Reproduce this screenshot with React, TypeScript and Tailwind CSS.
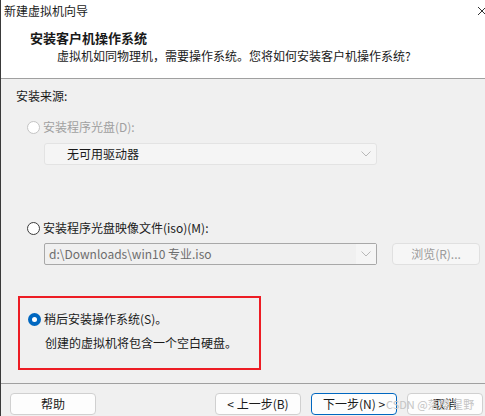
import React from "react";

const FONT = "font-['Microsoft_YaHei_UI','Noto_Sans_CJK_SC',sans-serif]";

type RadioProps = { checked?: boolean; disabled?: boolean };

const Radio = ({ checked, disabled }: RadioProps) => {
  if (checked) {
    return (
      <span className="flex h-[13px] w-[13px] items-center justify-center rounded-full bg-[#0067c0]">
        <span className="h-[5px] w-[5px] rounded-full bg-white" />
      </span>
    );
  }
  return (
    <span
      className={`h-[13px] w-[13px] rounded-full border bg-white ${
        disabled ? "border-[#c4c4c4] bg-[#f7f7f7]" : "border-[#3c3c3c]"
      }`}
    />
  );
};

const Chevron = ({ color }: { color: string }) => (
  <svg width="10" height="6" viewBox="0 0 10 6" fill="none">
    <path d="M0.5 0.5 L5 5 L9.5 0.5" stroke={color} strokeWidth="1" />
  </svg>
);

const Button = ({ label, primary }: { label: string; primary?: boolean }) => (
  <button
    className={`flex h-[22px] w-[86px] items-center justify-center rounded-[4px] bg-[#fdfdfd] text-[12px] leading-none text-[#1a1a1a] ${
      primary ? "border-[1.5px] border-[#0067c0]" : "border border-[#d0d0d0]"
    }`}
  >
    {label}
  </button>
);

export default function App() {
  return (
    <div
      className={`relative flex h-[416px] w-[485px] flex-col overflow-hidden border-l border-[#3a3a3a] bg-[#f0f0f0] text-[#1a1a1a] ${FONT}`}
    >
      {/* header */}
      <div className="relative h-[79px] shrink-0 border-b border-[#a0a0a0] bg-white">
        <div className="pl-[3px] pt-[3px] text-[12px] leading-[16px]">新建虚拟机向导</div>
        <svg className="absolute left-[476px] top-[6px]" width="12" height="10" viewBox="0 0 12 10">
          <path d="M1 1 L9 9 M9 1 L1 9" stroke="#333" strokeWidth="1" />
        </svg>
        <div className="mt-[11px] pl-[29px] text-[13px] font-bold leading-[16px]">安装客户机操作系统</div>
        <div className="mt-[2px] pl-[56px] text-[12px] leading-[16px]">
          虚拟机如同物理机，需要操作系统。您将如何安装客户机操作系统?
        </div>
      </div>

      {/* body */}
      <div className="flex flex-col">
        <div className="mt-[9px] pl-[15px] text-[12px] leading-[16px]">安装来源:</div>

        <div className="mt-[15px] flex h-[16px] items-center gap-[3px] pl-[26px] text-[12px] text-[#a0a0a0]">
          <Radio disabled />
          <span>安装程序光盘(D):</span>
        </div>
        <div className="ml-[43px] mt-[8px] flex h-[22px] w-[333px] items-center justify-between rounded-[3px] border border-[#e3e3e3] bg-[#f5f5f5] pl-[22px] pr-[5px] text-[12px]">
          <span>无可用驱动器</span>
          <Chevron color="#b8b8b8" />
        </div>

        <div className="mt-[55px] flex h-[16px] items-center gap-[3px] pl-[26px] text-[12px]">
          <Radio />
          <span>安装程序光盘映像文件(iso)(M):</span>
        </div>
        <div className="mt-[7px] flex items-center gap-[15px] pl-[43px]">
          <div className="flex h-[22px] w-[333px] items-stretch rounded-[2px] border border-[#a8a8a8] bg-[#f0f0f0] text-[12px] text-[#6d6d6d]">
            <span className="flex flex-1 items-center pl-[4px]">d:\Downloads\win10 专业.iso</span>
            <span className="flex w-[20px] items-center justify-center bg-[#f5f5f5]">
              <Chevron color="#b8b8b8" />
            </span>
          </div>
          <div className="flex h-[22px] w-[88px] items-center justify-center rounded-[4px] border border-[#e0e0e0] bg-[#f6f6f6] text-[12px] text-[#9a9a9a]">
            浏览(R)...
          </div>
        </div>

        <div className="ml-[17px] mt-[31px] h-[74px] w-[243px] border-2 border-[#ed1c24] pt-[13px]">
          <div className="flex h-[16px] items-center gap-[3px] pl-[8px] text-[12px]">
            <Radio checked />
            <span>稍后安装操作系统(S)。</span>
          </div>
          <div className="mt-[8px] pl-[25px] text-[12px] leading-[16px]">创建的虚拟机将包含一个空白硬盘。</div>
        </div>

        <div className="mt-[13px] h-px w-full bg-[#a0a0a0]" />

        <div className="mt-[9px] flex items-center pl-[9px]">
          <Button label="帮助" />
          <div className="ml-[119px] flex gap-[10px]">
            <Button label="< 上一步(B)" />
            <Button label="下一步(N) >" primary />
            <div className="flex h-[22px] w-[76px] items-center justify-center rounded-[4px] border border-[#d0d0d0] bg-[#fdfdfd] text-[12px] text-[#1a1a1a]">
              取消
            </div>
          </div>
        </div>
      </div>

      <span className="pointer-events-none absolute left-[385px] top-[397px] text-[11px] leading-[14px] text-[#c4c4c4]">
        CSDN @落樱 星野
      </span>
    </div>
  );
}
